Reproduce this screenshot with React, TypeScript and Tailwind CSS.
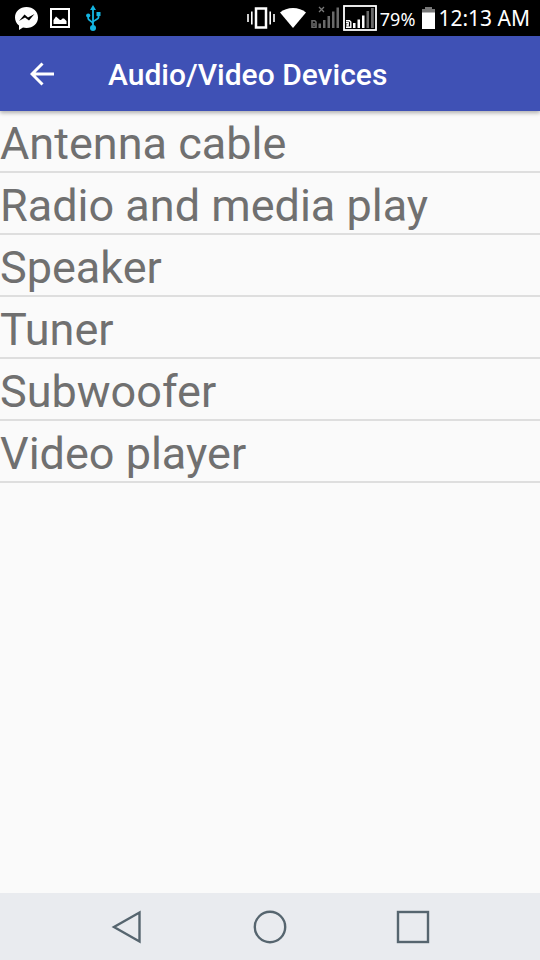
const devices = [
  'Antenna cable',
  'Radio and media play',
  'Speaker',
  'Tuner',
  'Subwoofer',
  'Video player',
];

function MessengerIcon() {
  return (
    <svg width="23" height="24" viewBox="0 0 23 24" aria-hidden="true">
      <path
        fill="#fff"
        d="M11.500 1C5 1 0 5.500 0 11.500c0 3.300 1.500 6.100 4 8V24l4-2.500c1.200.3 2.300.5 3.500.5C18 22 23 17.500 23 11.500S18 1 11.500 1z"
      />
      <path fill="#000" d="M4 15l5.500-6.500 3.500 3 6.500-3.500-5.500 6.500-4-3z" />
    </svg>
  );
}

function GalleryIcon() {
  return (
    <svg width="20" height="20" viewBox="0 0 20 20" aria-hidden="true">
      <rect x="1" y="1" width="18" height="18" fill="none" stroke="#fff" strokeWidth="2" />
      <path fill="#fff" d="M3.500 16v-4l2.500-3.500 4 3.500h1l1.500-1.500h1.500l2.500 2.500v3z" />
    </svg>
  );
}

function UsbIcon() {
  return (
    <svg className="ml-1" width="15" height="26" viewBox="0 0 15 26" fill="#14b5e2" aria-hidden="true">
      <path d="M7 0l3 5H4z" />
      <circle cx="7" cy="23" r="3" />
      <circle cx="2.200" cy="10.500" r="2.100" />
      <rect x="10.500" y="7" width="4" height="4" />
      <path
        fill="none"
        stroke="#14b5e2"
        strokeWidth="1.800"
        d="M7 4v18M2.200 11v2.500c0 2 4.800 2.500 4.800 5.500M12.500 10v2.500c0 2-5.500 2.500-5.500 5"
      />
    </svg>
  );
}

function VibrateIcon() {
  return (
    <svg width="28" height="22" viewBox="0 0 28 22" aria-hidden="true">
      <rect x="9" y="1.500" width="10" height="19" fill="none" stroke="#fff" strokeWidth="2.500" />
      <path stroke="#fff" strokeWidth="1.600" d="M1 7v8M4.800 4.500v13M23.200 4.500v13M27 7v8" />
    </svg>
  );
}

function WifiIcon() {
  return (
    <svg width="26" height="20" viewBox="0 0 26 20" aria-hidden="true">
      <path fill="#fff" d="M13 20L0 4.500C3.500 1.500 8 0 13 0s9.500 1.500 13 4.500z" />
    </svg>
  );
}

function NoSignalIcon() {
  return (
    <svg width="29" height="24" viewBox="0 0 29 24" aria-hidden="true">
      <path stroke="#777" strokeWidth="1.300" d="M8 1l5 5M13 1L8 6" />
      <path fill="none" stroke="#6a6a6a" strokeWidth="1.600" d="M1 14.800h2.800l1.200 1.200v5.200H1zM3 17v3" />
      <path fill="#6a6a6a" d="M7.500 17.500h2.500V22H7.500zM12 14h2.500v8H12zM16.500 10h2.500v12h-2.500zM21 5.500h2.500V22H21zM25.500 1.500h2.500V22h-2.500z" />
    </svg>
  );
}

function SignalIcon() {
  return (
    <svg width="34" height="26" viewBox="0 0 34 26" aria-hidden="true">
      <rect x="1" y="1" width="32" height="24" fill="none" stroke="#fff" strokeWidth="1.800" />
      <path fill="none" stroke="#fff" strokeWidth="1.400" d="M3 15.800h3.500l1.300 1.200v5.300H3" />
      <path fill="none" stroke="#fff" strokeWidth="1.200" d="M3 17.700h2.300v1.600H4v1.500h2" />
      <path fill="#fff" d="M10 18h2.500v5H10zM14.500 14.500h2.500V23h-2.500zM19 10.500h2.500V23H19z" />
      <path fill="#6a6a6a" d="M23.500 6h2.500v17h-2.500zM28 3h2.800v20H28z" />
    </svg>
  );
}

function BatteryIcon() {
  return (
    <svg width="13" height="22" viewBox="0 0 13 22" aria-hidden="true">
      <path fill="#777" d="M3 0h7v2h3v4H0V2h3z" />
      <path fill="#fff" d="M0 5.500h13V22H0z" />
    </svg>
  );
}

function StatusBar() {
  return (
    <div className="flex h-9 items-center justify-between bg-black pr-2.5 pl-[15px] font-['Noto_Sans','Open_Sans',sans-serif] text-white">
      <div className="flex items-center gap-3">
        <MessengerIcon />
        <GalleryIcon />
        <UsbIcon />
      </div>
      <div className="flex items-center gap-[3px]">
        <VibrateIcon />
        <span className="px-0.5">
          <WifiIcon />
        </span>
        <NoSignalIcon />
        <SignalIcon />
        <span className="mr-1 pt-0.5 text-lg">79%</span>
        <BatteryIcon />
        <time className="pt-0.5 text-[21px]">12:13 AM</time>
      </div>
    </div>
  );
}

function AppBar() {
  return (
    <header className="relative flex h-[75px] items-center bg-[#3f51b5] text-white shadow-[0_2px_4px_rgba(0,0,0,0.3)]">
      <button type="button" aria-label="Back" className="flex w-[84px] items-center justify-center">
        <svg width="24" height="24" viewBox="0 0 24 24" fill="none" stroke="#fff" strokeWidth="3" aria-hidden="true">
          <path d="M24 12H2M12.500 1.500L2 12l10.500 10.500" />
        </svg>
      </button>
      <h1 className="ml-6 pt-0.5 text-[30px] font-medium">Audio/Video Devices</h1>
    </header>
  );
}

function NavigationBar() {
  return (
    <nav
      aria-label="System"
      className="grid h-[67px] grid-cols-3 bg-[#e9ebef] px-14 text-[#56656f]"
    >
      <button type="button" aria-label="Back" className="flex items-center justify-center">
        <svg width="34" height="34" viewBox="0 0 34 34" fill="none" stroke="currentColor" strokeWidth="2.400" aria-hidden="true">
          <path d="M29.500 2.500v29L4 17z" />
        </svg>
      </button>
      <button type="button" aria-label="Home" className="flex items-center justify-center">
        <svg width="34" height="34" viewBox="0 0 34 34" fill="none" stroke="currentColor" strokeWidth="2.400" aria-hidden="true">
          <circle cx="17" cy="17" r="15.200" />
        </svg>
      </button>
      <button type="button" aria-label="Recent apps" className="flex items-center justify-center">
        <svg width="34" height="34" viewBox="0 0 34 34" fill="none" stroke="currentColor" strokeWidth="2.400" aria-hidden="true">
          <rect x="2" y="2" width="30" height="30" />
        </svg>
      </button>
    </nav>
  );
}

export default function App() {
  return (
    <div className="flex min-h-screen flex-col bg-[#fafafa] font-[Roboto,sans-serif]">
      <StatusBar />
      <AppBar />
      <main className="flex-1">
        <ul>
          {devices.map((name) => (
            <li key={name} className="border-b-2 border-[#dedede]">
              <button type="button" className="block w-full pt-1.5 text-left text-[45px] leading-[54px] text-[#707070]">
                {name}
              </button>
            </li>
          ))}
        </ul>
      </main>
      <NavigationBar />
    </div>
  );
}
